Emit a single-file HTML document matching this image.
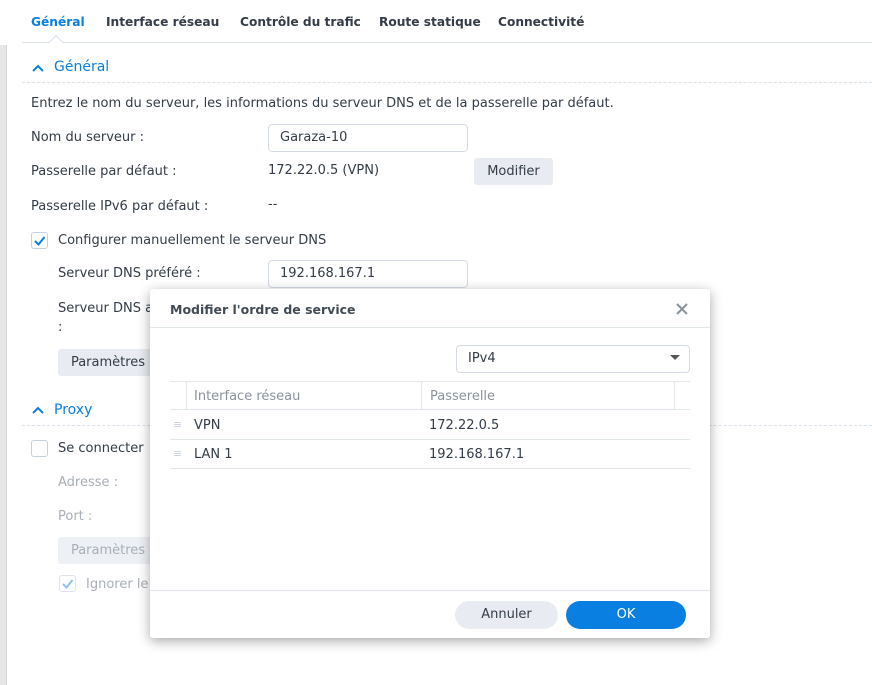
<!DOCTYPE html>
<html><head><meta charset="utf-8"><style>
*{margin:0;padding:0;box-sizing:border-box}
body{width:872px;height:685px;overflow:hidden;background:#fff;font-family:"DejaVu Sans","Liberation Sans",sans-serif;font-size:13px;color:#333c47;position:relative}
.a{position:absolute;white-space:nowrap}
.tab{top:15px;font-weight:bold;font-size:12.2px;color:#333c47}
.inp{position:absolute;height:28px;border:1px solid #d5dbe3;border-radius:4px;background:#fff;padding:5px 11px;font-size:13px}
.btn{position:absolute;background:#e8ecf2;border-radius:3px;height:27px;text-align:center;line-height:27px}
.gray{color:#a8afb8}
.cb{position:absolute;width:17px;height:17px;border:1px solid #c8d0da;border-radius:3px;background:#fff}
.sh{color:#0a7fe2;font-size:14px}
</style></head><body>
<div class="a" style="left:0;top:45px;width:7px;height:640px;background:#e6e6e6;border-right:1px solid #d6d6d6"></div>
<div class="a tab" style="left:31px;color:#0a7fe2">Général</div>
<div class="a tab" style="left:106px">Interface réseau</div>
<div class="a tab" style="left:240px">Contrôle du trafic</div>
<div class="a tab" style="left:379px">Route statique</div>
<div class="a tab" style="left:498px">Connectivité</div>
<div class="a" style="left:22px;top:42px;width:850px;border-top:1px solid #d9e1ea"></div>
<div class="a" style="left:51px;top:37px;width:10px;height:10px;background:#fff;border-left:1px solid #d9e1ea;border-top:1px solid #d9e1ea;transform:rotate(45deg)"></div>
<svg class="a" style="left:31px;top:63px" width="14" height="10"><path d="M2 8 L7 3 L12 8" stroke="#0a7fe2" stroke-width="2" fill="none"/></svg>
<div class="a sh" style="left:54px;top:59px">Général</div>
<div class="a" style="left:22px;top:82px;width:850px;border-top:1px dashed #d9e1ea"></div>
<div class="a" style="left:31px;top:96px">Entrez le nom du serveur, les informations du serveur DNS et de la passerelle par défaut.</div>
<div class="a" style="left:31px;top:130px">Nom du serveur :</div>
<div class="inp" style="left:268px;top:124px;width:200px">Garaza-10</div>
<div class="a" style="left:31px;top:164px">Passerelle par défaut :</div>
<div class="a" style="left:268px;top:163px">172.22.0.5 (VPN)</div>
<div class="btn" style="left:474px;top:158px;width:79px">Modifier</div>
<div class="a" style="left:31px;top:199px">Passerelle IPv6 par défaut :</div>
<div class="a" style="left:268px;top:197px">--</div>
<div class="cb" style="left:31px;top:232px"></div>
<svg class="a" style="left:31px;top:232px" width="17" height="17"><path d="M4 9 L7.5 12.5 L13.5 5" stroke="#0a7fe2" stroke-width="2" fill="none"/></svg>
<div class="a" style="left:58px;top:233px">Configurer manuellement le serveur DNS</div>
<div class="a" style="left:58px;top:266px">Serveur DNS préféré :</div>
<div class="inp" style="left:268px;top:260px;width:200px">192.168.167.1</div>
<div class="a" style="left:58px;top:301px">Serveur DNS a</div>
<div class="a" style="left:58px;top:320px">:</div>
<div class="btn" style="left:58px;top:349px;width:100px">Paramètres</div>
<svg class="a" style="left:31px;top:405px" width="14" height="10"><path d="M2 8 L7 3 L12 8" stroke="#0a7fe2" stroke-width="2" fill="none"/></svg>
<div class="a sh" style="left:54px;top:402px">Proxy</div>
<div class="a" style="left:22px;top:425px;width:850px;border-top:1px dashed #d9e1ea"></div>
<div class="cb" style="left:31px;top:440px"></div>
<div class="a" style="left:58px;top:441px">Se connecter</div>
<div class="a gray" style="left:58px;top:475px">Adresse :</div>
<div class="a gray" style="left:58px;top:509px">Port :</div>
<div class="btn gray" style="left:58px;top:537px;width:100px;background:#edf0f5">Paramètres</div>
<div class="cb" style="left:59px;top:575px;border-color:#dde3ea"></div>
<svg class="a" style="left:59px;top:575px" width="17" height="17"><path d="M4 9 L7.5 12.5 L13.5 5" stroke="#8cc3f0" stroke-width="2" fill="none"/></svg>
<div class="a gray" style="left:86px;top:577px">Ignorer le</div>

<div class="a" style="left:150px;top:289px;width:560px;height:349px;background:#fff;border-radius:3px;box-shadow:0 3px 12px rgba(0,0,0,.35)">
 <div class="a" style="left:20px;top:13px;font-weight:bold;font-size:12.5px;color:#414b55">Modifier l'ordre de service</div>
 <svg class="a" style="left:526px;top:14px" width="12" height="12"><path d="M1 1 L11 11 M11 1 L1 11" stroke="#8a939c" stroke-width="2"/></svg>
 <div class="a" style="left:0;top:38px;width:560px;border-top:1px solid #e1e6ec"></div>
 <div class="inp" style="left:306px;top:56px;width:234px;height:28px;padding-top:5px">IPv4</div>
 <svg class="a" style="left:520px;top:66px" width="10" height="6"><path d="M0 0 L10 0 L5 5Z" fill="#555"/></svg>
 <div class="a" style="left:20px;top:92px;width:520px;height:29px;border-top:1px solid #e1e6ec;border-bottom:1px solid #e1e6ec"></div>
 <div class="a" style="left:36px;top:92px;height:29px;border-left:1px solid #e1e6ec"></div>
 <div class="a" style="left:271px;top:92px;height:29px;border-left:1px solid #e1e6ec"></div>
 <div class="a" style="left:524px;top:92px;height:29px;border-left:1px solid #e1e6ec"></div>
 <div class="a" style="left:44px;top:100px;color:#8a939c">Interface réseau</div>
 <div class="a" style="left:280px;top:100px;color:#8a939c">Passerelle</div>
 <div class="a" style="left:23px;top:129px;color:#c8d0da;font-size:11px">≡</div>
 <div class="a" style="left:44px;top:129px">VPN</div>
 <div class="a" style="left:279px;top:129px">172.22.0.5</div>
 <div class="a" style="left:20px;top:150px;width:520px;border-top:1px solid #e1e6ec"></div>
 <div class="a" style="left:23px;top:158px;color:#c8d0da;font-size:11px">≡</div>
 <div class="a" style="left:44px;top:158px">LAN 1</div>
 <div class="a" style="left:279px;top:158px">192.168.167.1</div>
 <div class="a" style="left:20px;top:179px;width:520px;border-top:1px solid #e1e6ec"></div>
 <div class="a" style="left:0;top:301px;width:560px;border-top:1px solid #e1e6ec"></div>
 <div class="a" style="left:305px;top:312px;width:103px;height:28px;border-radius:14px;background:#e8ecf2;text-align:center;line-height:28px">Annuler</div>
 <div class="a" style="left:416px;top:312px;width:120px;height:28px;border-radius:14px;background:#0a7fe2;color:#fff;text-align:center;line-height:28px">OK</div>
</div>
</body></html>
